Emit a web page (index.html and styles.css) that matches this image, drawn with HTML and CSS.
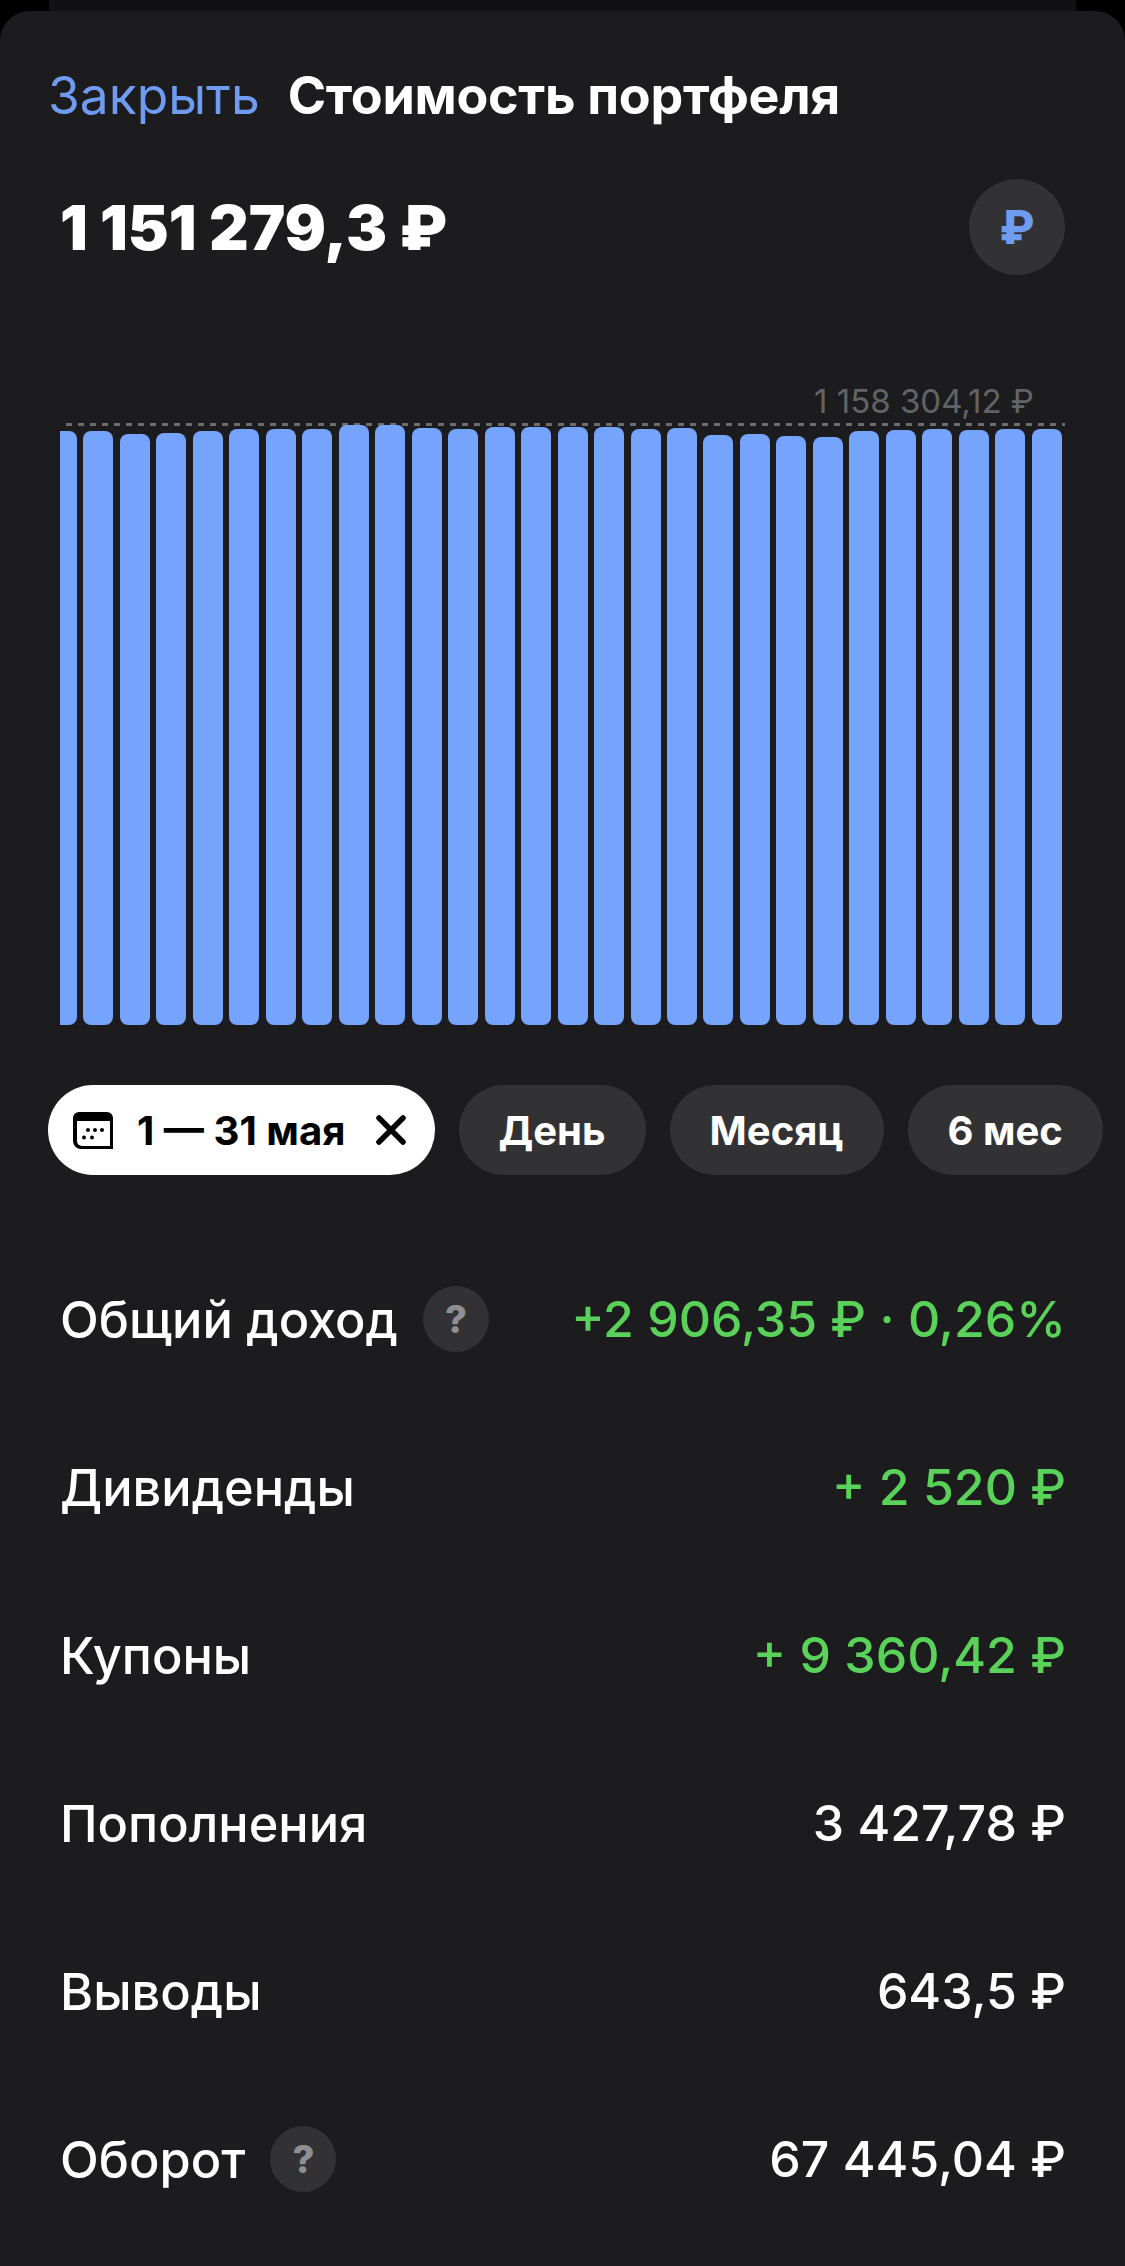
FILE: index.html
```html
<!DOCTYPE html>
<html lang="ru">
<head>
<meta charset="UTF-8">
<title>Стоимость портфеля</title>
<link rel="stylesheet" href="styles.css">
</head>
<body>
<div class="backcard"></div>
<div class="sheet">

  <div class="top">
    <span class="close">Закрыть</span>
    <span class="title">Стоимость портфеля</span>
  </div>

  <div class="total">
    <span class="total-sum">1 151 279,3 ₽</span>
    <span class="currency">₽</span>
  </div>

  <div class="max-label">1 158 304,12 ₽</div>
  <div class="max-line"></div>
  <div class="bars">
    <div class="bar bar-first" style="height:594px"></div>
    <div class="bar" style="height:594px"></div>
    <div class="bar" style="height:591px"></div>
    <div class="bar" style="height:592px"></div>
    <div class="bar" style="height:594px"></div>
    <div class="bar" style="height:596px"></div>
    <div class="bar" style="height:596px"></div>
    <div class="bar" style="height:596px"></div>
    <div class="bar" style="height:600px"></div>
    <div class="bar" style="height:600px"></div>
    <div class="bar" style="height:597px"></div>
    <div class="bar" style="height:596px"></div>
    <div class="bar" style="height:598px"></div>
    <div class="bar" style="height:598px"></div>
    <div class="bar" style="height:598px"></div>
    <div class="bar" style="height:598px"></div>
    <div class="bar" style="height:596px"></div>
    <div class="bar" style="height:597px"></div>
    <div class="bar" style="height:590px"></div>
    <div class="bar" style="height:591px"></div>
    <div class="bar" style="height:589px"></div>
    <div class="bar" style="height:588px"></div>
    <div class="bar" style="height:594px"></div>
    <div class="bar" style="height:595px"></div>
    <div class="bar" style="height:596px"></div>
    <div class="bar" style="height:595px"></div>
    <div class="bar" style="height:596px"></div>
    <div class="bar" style="height:596px"></div>
  </div>

  <div class="chips">
    <div class="chip chip-active">
      <svg class="chip-cal" width="40" height="37" viewBox="0 0 40 37">
        <path d="M6 0H34A6 6 0 0 1 40 6V37H8A8 8 0 0 1 0 29V6A6 6 0 0 1 6 0Z" fill="#000"/>
        <path d="M4 9H37V34H9A5 5 0 0 1 4 29Z" fill="#fff"/>
        <circle cx="15" cy="18" r="2" fill="#000"/>
        <circle cx="22" cy="18" r="2" fill="#000"/>
        <circle cx="29" cy="18" r="2" fill="#000"/>
        <circle cx="11" cy="25.5" r="2" fill="#000"/>
        <circle cx="19" cy="25.5" r="2" fill="#000"/>
      </svg>
      <span>1 — 31 мая</span>
      <svg class="chip-x" width="30" height="30" viewBox="0 0 30 30">
        <path d="M3 3L27 27M27 3L3 27" stroke="#000" stroke-width="5.5" stroke-linecap="round"/>
      </svg>
    </div>
    <div class="chip">День</div>
    <div class="chip">Месяц</div>
    <div class="chip">6 мес</div>
  </div>

  <div class="rows">
    <div class="row">
      <div class="row-name">Общий доход <span class="hint">?</span></div>
      <div class="row-value green">+2 906,35 ₽ · 0,26%</div>
    </div>
    <div class="row">
      <div class="row-name">Дивиденды</div>
      <div class="row-value green">+ 2 520 ₽</div>
    </div>
    <div class="row">
      <div class="row-name">Купоны</div>
      <div class="row-value green">+ 9 360,42 ₽</div>
    </div>
    <div class="row">
      <div class="row-name">Пополнения</div>
      <div class="row-value">3 427,78 ₽</div>
    </div>
    <div class="row">
      <div class="row-name">Выводы</div>
      <div class="row-value">643,5 ₽</div>
    </div>
    <div class="row">
      <div class="row-name">Оборот <span class="hint">?</span></div>
      <div class="row-value">67 445,04 ₽</div>
    </div>
  </div>

</div>
</body>
</html>
```

FILE: styles.css
```css
html, body {
  margin: 0;
  height: 2266px;
  overflow: hidden;
  background-color: #000;
}

body {
  font-family: Inter, "Noto Sans", sans-serif;
  color: #fff;
}

.backcard {
  height: 11px;
  margin: 0 49px;
  background-color: #111113;
}

.sheet {
  height: 2255px;
  overflow: hidden;
  background-color: #1c1c1e;
  border-radius: 30px 30px 0 0;
}

.top {
  display: flex;
  align-items: baseline;
  gap: 28px;
  padding: 52px 0 0 48px;
  line-height: 64px;
}

.close {
  font-size: 51.5px;
  color: #6f9bf0;
}

.title {
  font-size: 52px;
  font-weight: 700;
  letter-spacing: -0.3px;
}

.total {
  display: flex;
  justify-content: space-between;
  align-items: center;
  padding: 51px 60px 0 60px;
}

.total-sum {
  font-size: 61.5px;
  font-weight: 900;
}

.currency {
  width: 96px;
  height: 96px;
  border-radius: 50%;
  background-color: #323235;
  color: #6f9bf0;
  font-size: 46px;
  font-weight: 800;
  line-height: 96px;
  text-align: center;
}

.max-label {
  margin-top: 106px;
  padding-right: 91px;
  text-align: right;
  font-size: 33px;
  line-height: 40px;
  color: #636366;
}

.max-line {
  height: 3px;
  margin: 2px 60px 0 66px;
  background-image: repeating-linear-gradient(to right, #6d6d6d 0 6px, transparent 6px 12px);
}

/* bars: 30 wide, 36.6 step */
.bars {
  display: flex;
  align-items: flex-end;
  justify-content: space-between;
  height: 599px;
  margin: 0 63px 0 60px;
}

.bar {
  width: 30px;
  background-color: #76a3fb;
  border-radius: 8px;
}

.bar-first {
  width: 17px;
  border-radius: 0 8px 8px 0;
}

.chips {
  display: flex;
  gap: 24px;
  margin: 60px 0 0 48px;
  width: 1200px;
}

.chip {
  display: flex;
  align-items: center;
  height: 90px;
  padding: 0 40px;
  border-radius: 45px;
  background-color: #323235;
  font-size: 40px;
  font-weight: 700;
}

.chip-active {
  padding: 0 29px 0 25px;
  background-color: #fff;
  color: #000;
  font-size: 40.2px;
}

.chip-cal {
  margin-right: 24px;
}

.chip-x {
  margin-left: 30px;
}

.rows {
  margin-top: 60px;
  padding: 0 59px 0 60px;
}

.row {
  display: flex;
  justify-content: space-between;
  align-items: center;
  height: 168px;
  font-size: 50px;
  font-weight: 500;
}

.row-name {
  display: flex;
  align-items: center;
  gap: 25px;
  font-size: 50.5px;
}

.green {
  color: #5ad25a;
}

.hint {
  width: 66px;
  height: 66px;
  border-radius: 50%;
  background-color: #323235;
  color: #8e8e93;
  font-size: 38px;
  font-weight: 800;
  line-height: 66px;
  text-align: center;
}
```
